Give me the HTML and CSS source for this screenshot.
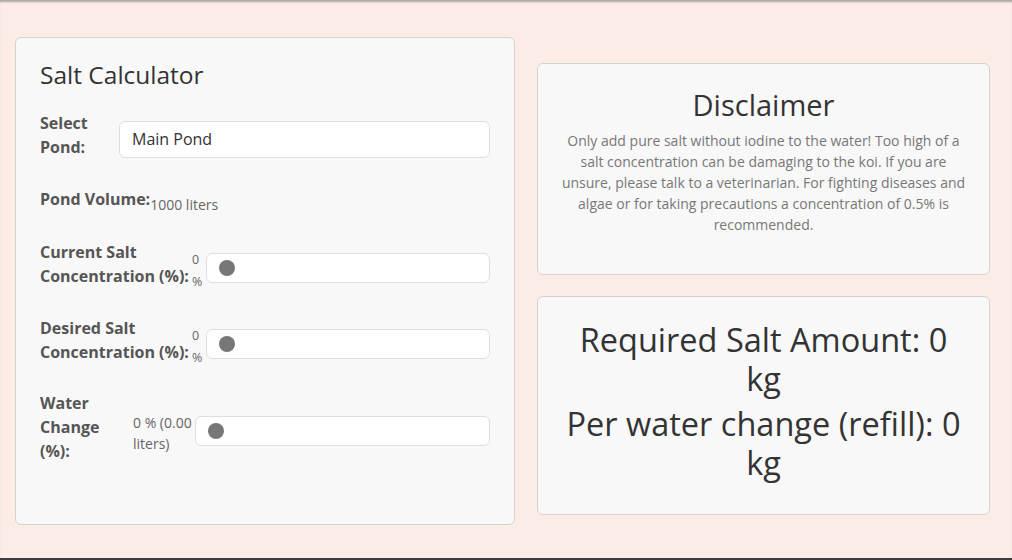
FILE: index.html
```html
<!DOCTYPE html>
<html lang="en">
<head>
<meta charset="utf-8">
<title>Salt Calculator</title>
<link rel="stylesheet" href="styles.css">
</head>
<body>
<div class="page">
  <main class="layout">
    <section class="card calc">
      <h2 class="calc-title">Salt Calculator</h2>
      <div class="row row-select">
        <label class="lbl lbl-select">Select Pond:</label>
        <div class="select-box">Main Pond</div>
      </div>
      <div class="row row-volume">
        <span class="lbl">Pond Volume:</span>
        <span class="val val-volume">1000 liters</span>
      </div>
      <div class="row row-range row-current">
        <span class="lbl lbl-conc">Current Salt Concentration (%):</span>
        <span class="val val-pct">0 %</span>
        <div class="range"><span class="thumb"></span></div>
      </div>
      <div class="row row-range">
        <span class="lbl lbl-conc">Desired Salt Concentration (%):</span>
        <span class="val val-pct">0 %</span>
        <div class="range"><span class="thumb"></span></div>
      </div>
      <div class="row row-water">
        <span class="lbl lbl-water">Water Change (%):</span>
        <span class="val val-water">0 % (0.00 liters)</span>
        <div class="range range-water"><span class="thumb"></span></div>
      </div>
    </section>
    <div class="side">
      <section class="card disclaimer">
        <h2 class="disc-title">Disclaimer</h2>
        <p class="disc-text">Only add pure salt without iodine to the water! Too high of a salt concentration can be damaging to the koi. If you are unsure, please talk to a veterinarian. For fighting diseases and algae or for taking precautions a concentration of 0.5% is recommended.</p>
      </section>
      <section class="card result">
        <p class="res-line">Required Salt Amount: 0 kg</p>
        <p class="res-line">Per water change (refill): 0 kg</p>
      </section>
    </div>
  </main>
</div>
</body>
</html>
```

FILE: styles.css
```css
* { box-sizing: border-box; }
html, body { margin: 0; padding: 0; }
body {
  font-family: "Open Sans", "Liberation Sans", sans-serif;
  color: #333;
  background: #fbede5;
}
.page {
  height: 560px;
  box-shadow: inset 0 3px 2px -1px rgba(0,0,0,0.3);
  border-bottom: 2px solid #3d3d3d;
  padding: 37px 0 0 15px;
}
.layout {
  display: flex;
  align-items: flex-start;
  gap: 22px;
}
.card {
  background: #f8f8f8;
  border: 1px solid #d2d2d2;
  border-radius: 6px;
}
.calc {
  width: 500px;
  padding: 22px 24px 34px 24px;
}
.calc-title {
  margin: 0 0 22px;
  font-size: 24.5px;
  font-weight: 400;
  line-height: 29px;
  color: #333;
}
.row {
  display: flex;
  align-items: flex-start;
  margin-bottom: 27px;
}
.row-select { align-items: center; }
.lbl {
  font-weight: 700;
  font-size: 16px;
  line-height: 24px;
  color: #555;
  flex: none;
}
.lbl-select { width: 79px; }
.lbl-conc { width: 152px; }
.lbl-water { width: 93px; }
.select-box {
  flex: 1;
  height: 37px;
  margin-top: 8px;
  background: #fff;
  border: 1px solid #dedede;
  border-radius: 6px;
  padding: 0 12px;
  display: flex;
  align-items: center;
  font-size: 16px;
  color: #333;
}
.row-volume {
  padding-top: 1px;
  margin-bottom: 25px;
}
.row-current { margin-bottom: 28px; }
.val {
  color: #666;
  flex: none;
}
.val-volume {
  font-size: 14px;
  line-height: 21px;
  padding-top: 7px;
}
.row-range { height: 48px; }
.row-water { height: 72px; }
.val-pct {
  font-size: 12.5px;
  line-height: 22px;
  width: 13px;
  margin-right: 1px;
  margin-top: 9px;
}
.val-water {
  font-size: 14px;
  line-height: 21px;
  width: 60px;
  margin-right: 2px;
  margin-top: 21px;
}
.range {
  flex: 1;
  height: 30px;
  margin-top: 13px;
  background: #fff;
  border: 1px solid #dedede;
  border-radius: 6px;
  padding: 0 12px;
  display: flex;
  align-items: center;
}
.range-water { margin-top: 25px; }
.thumb {
  width: 16px;
  height: 16px;
  border-radius: 50%;
  background: #777;
}
.side {
  width: 453px;
  padding-top: 26px;
  display: flex;
  flex-direction: column;
  gap: 21px;
}
.disclaimer {
  height: 212px;
  padding: 24px 20px;
  text-align: center;
}
.disc-title {
  margin: 0 0 8px;
  font-size: 29px;
  font-weight: 400;
  line-height: 34px;
  color: #333;
}
.disc-text {
  margin: 0;
  font-size: 14px;
  line-height: 21px;
  color: #777;
}
.result {
  height: 219px;
  padding: 23px 25px;
  text-align: center;
}
.res-line {
  margin: 0;
  font-size: 32.5px;
  line-height: 39px;
  color: #333;
}
.res-line + .res-line { margin-top: 6px; }
```
